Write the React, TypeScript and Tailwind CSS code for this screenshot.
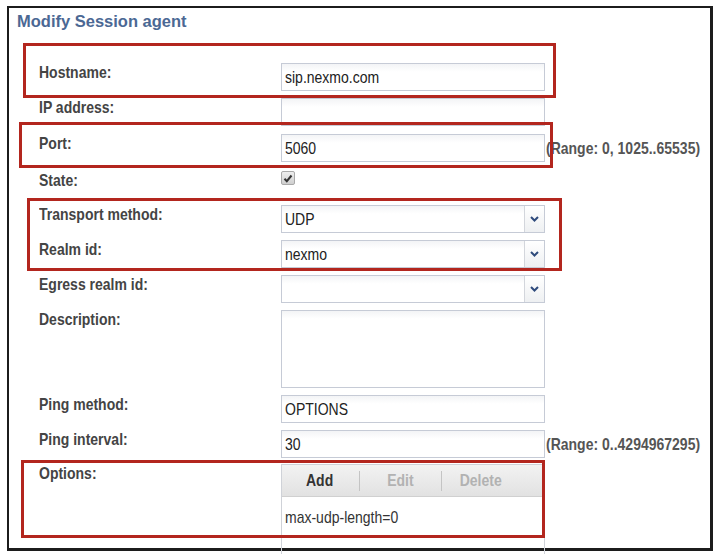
import type { ReactNode } from "react";

const font = { fontFamily: "'Liberation Sans', Arial, sans-serif" };

// the source screenshot is a little stretched vertically, so text gets a small y-scale
function T({ children }: { children: ReactNode }) {
  return <span className="inline-block origin-center scale-y-[1.15]">{children}</span>;
}

function Row({ h, label, children }: { h: string; label: string; children?: ReactNode }) {
  return (
    <div className={`flex ${h}`}>
      <div className="w-[272px] shrink-0 pl-[30px] pt-[1px] text-[14px] font-bold leading-[16px] text-[#444]">
        <T>{label}</T>
      </div>
      <div className="flex items-start">{children}</div>
    </div>
  );
}

function TextBox({ value = "" }: { value?: string }) {
  return (
    <div className="flex h-[28px] w-[264px] items-center border border-[#c6cbd6] bg-gradient-to-b from-[#f3f4f6] to-white to-[30%] px-[3px] text-[14px] text-[#222]">
      <T>{value}</T>
    </div>
  );
}

function Select({ value = "" }: { value?: string }) {
  return (
    <div className="flex h-[28px] w-[264px] border border-[#c6cbd6] bg-gradient-to-b from-[#f3f4f6] to-white to-[30%] text-[14px] text-[#222]">
      <div className="flex flex-1 items-center px-[3px]">
        <T>{value}</T>
      </div>
      <div className="flex w-[20px] items-center justify-center border-l border-[#d3d6dc] bg-gradient-to-b from-white to-[#eef0f2]">
        <svg width="9" height="6" viewBox="0 0 9 6">
          <path d="M1 1l3.5 3.5L8 1" fill="none" stroke="#2f4b7c" strokeWidth="2" />
        </svg>
      </div>
    </div>
  );
}

function Range({ text }: { text: string }) {
  return (
    <div className="flex h-[28px] items-center pl-[1px] text-[14px] font-bold text-[#555]">
      <T>{text}</T>
    </div>
  );
}

export default function App() {
  return (
    <div className="relative h-[556px] w-[716px] bg-white" style={font}>
      <div className="absolute left-[7px] top-[6px] h-[545px] w-[706px] border-b-[3px] border-l-2 border-r-[3px] border-t-2 border-[#1c1c1c]">
        <div className="pl-[8px] pt-[4px] text-[16.5px] font-bold leading-[19px] text-[#4b6894]">
          Modify Session agent
        </div>
        <div className="mt-[32px] flex flex-col">
          <Row h="h-[35px]" label="Hostname:">
            <TextBox value="sip.nexmo.com" />
          </Row>
          <Row h="h-[36px]" label="IP address:">
            <TextBox />
          </Row>
          <Row h="h-[37px]" label="Port:">
            <TextBox value="5060" />
            <Range text="(Range: 0, 1025..65535)" />
          </Row>
          <Row h="h-[34px]" label="State:">
            <div className="flex h-[14px] w-[14px] items-center justify-center rounded-[2px] border border-[#a9a9a9] bg-gradient-to-b from-[#eeeeee] to-[#cfcfcf]">
              <svg width="10" height="9" viewBox="0 0 10 9">
                <path d="M1.5 4.8l2.3 2.4L8.5 1.5" fill="none" stroke="#333" strokeWidth="2" />
              </svg>
            </div>
          </Row>
          <Row h="h-[35px]" label="Transport method:">
            <Select value="UDP" />
          </Row>
          <Row h="h-[35px]" label="Realm id:">
            <Select value="nexmo" />
          </Row>
          <Row h="h-[35px]" label="Egress realm id:">
            <Select />
          </Row>
          <Row h="h-[85px]" label="Description:">
            <div className="h-[78px] w-[264px] border border-[#c6cbd6] bg-gradient-to-b from-[#f3f4f6] to-white to-[10%]" />
          </Row>
          <Row h="h-[35px]" label="Ping method:">
            <TextBox value="OPTIONS" />
          </Row>
          <Row h="h-[34px]" label="Ping interval:">
            <TextBox value="30" />
            <Range text="(Range: 0..4294967295)" />
          </Row>
          <Row h="h-[90px]" label="Options:">
            <div className="flex h-[90px] w-[264px] flex-col border-x border-t border-[#cfd2d8]">
              <div className="flex h-[32px] items-center border-b border-[#d0d0d0] bg-gradient-to-b from-[#f2f2f2] to-[#e2e2e2] text-[14px] font-bold">
                <span className="ml-[24px] text-[#333]">
                  <T>Add</T>
                </span>
                <span className="ml-[26px] h-[20px] w-px bg-[#c4c4c4]" />
                <span className="ml-[27px] text-[#b2b2b2]">
                  <T>Edit</T>
                </span>
                <span className="ml-[27px] h-[20px] w-px bg-[#c4c4c4]" />
                <span className="ml-[18px] text-[#b2b2b2]">
                  <T>Delete</T>
                </span>
              </div>
              <div className="flex h-[40px] items-center px-[3px] text-[14px] text-[#333]">
                <T>max-udp-length=0</T>
              </div>
            </div>
          </Row>
        </div>
      </div>

      {/* red annotation boxes */}
      <div className="absolute left-[23px] top-[43px] h-[55px] w-[533px] border-[3px] border-[#b3261e]" />
      <div className="absolute left-[19px] top-[122px] h-[46px] w-[534px] border-[3px] border-[#b3261e]" />
      <div className="absolute left-[27px] top-[198px] h-[73px] w-[535px] border-[3px] border-[#b3261e]" />
      <div className="absolute left-[21px] top-[460px] h-[78px] w-[524px] border-[3px] border-[#b3261e]" />
    </div>
  );
}
